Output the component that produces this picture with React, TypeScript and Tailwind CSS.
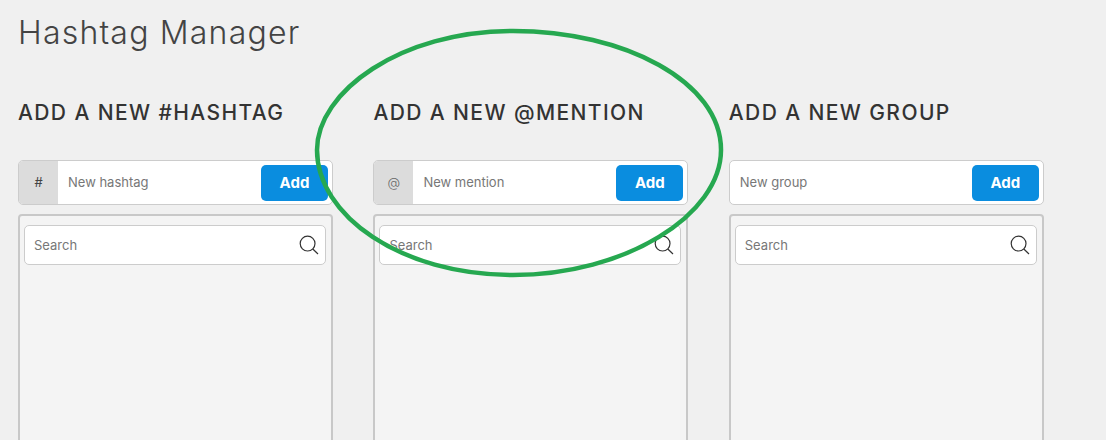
const Column = ({
  title,
  prefix,
  placeholder,
}: {title: string; prefix?: string; placeholder: string}) => {
  return (
    <div className="w-[315px] shrink-0">
      <h2 className="h-[26px] text-[21px] leading-[26px] font-medium tracking-[1.4px] whitespace-nowrap text-[#333333]">
        {title}
      </h2>
      <div className="mt-[34px] flex h-[45px] overflow-hidden rounded-[5px] border border-[#cccccc] bg-white">
        {prefix && (
          <div
            className={`flex w-[39px] shrink-0 items-center justify-center bg-[#dcdcdc] text-[13px] ${
              prefix === "@" ? "font-light text-[#666666]" : "text-[#444444]"}`}
          >
            {prefix}
          </div>
        )}
        <div className="flex min-w-0 flex-1 items-center py-[4px] pr-[4px] pl-[10px]">
          <input
            className="min-w-0 flex-1 bg-transparent text-[13px] outline-none placeholder:text-[#777777]"
            placeholder={placeholder}
          />
          <button className="h-[36px] w-[67px] shrink-0 rounded-[5px] bg-[#0a8ddf] pt-[1px] text-[15px] font-bold text-white">
            Add
          </button>
        </div>
      </div>
      <div className="mt-[9px] h-[300px] rounded-[4px] border-2 border-[#c8c8c8] bg-[#f4f4f4] pt-[9px] pr-[5px] pb-[4px] pl-[4px]">
        <div className="flex h-[40px] items-center rounded-[5px] border border-[#cccccc] bg-white pr-[6px] pl-[9px]">
          <input
            className="min-w-0 flex-1 bg-transparent pt-[2px] text-[13px] outline-none placeholder:text-[#777777]"
            placeholder="Search"
          />
          <svg width="20" height="20" viewBox="0 0 20 20" fill="none" stroke="#333333" strokeWidth="1.2">
            <circle cx="8.6" cy="8.6" r="7.4" />
            <path d="M13.8 14l5.2 5" />
          </svg>
        </div>
      </div>
    </div>
  );
};

export default function App() {
  return (
    <div className="relative h-[440px] w-[1106px] overflow-hidden bg-[#f0f0f0] font-['Inter',sans-serif]">
      <div className="px-[18px] pt-[14px]">
        <h1 className="h-[38px] text-[32px] leading-[38px] font-light tracking-[1.2px] text-[#444444]">
          Hashtag Manager
        </h1>
        <div className="mt-[48px] flex gap-[40.4px]">
          <Column title="ADD A NEW #HASHTAG" prefix="#" placeholder="New hashtag" />
          <Column title="ADD A NEW @MENTION" prefix="@" placeholder="New mention" />
          <Column title="ADD A NEW GROUP" placeholder="New group" />
        </div>
      </div>
      {/* hand drawn circle around the mention column */}
      <svg className="pointer-events-none absolute top-0 left-0" width="1106" height="440" fill="none">
        <path
          d="M513 31C400 31 317 92 317 150C317 215 400 275 513 275C625 275 721 215 721 150C721 82 625 31 513 31Z"
          stroke="#26a850"
          strokeWidth="4.5"
        />
      </svg>
    </div>
  );
}
